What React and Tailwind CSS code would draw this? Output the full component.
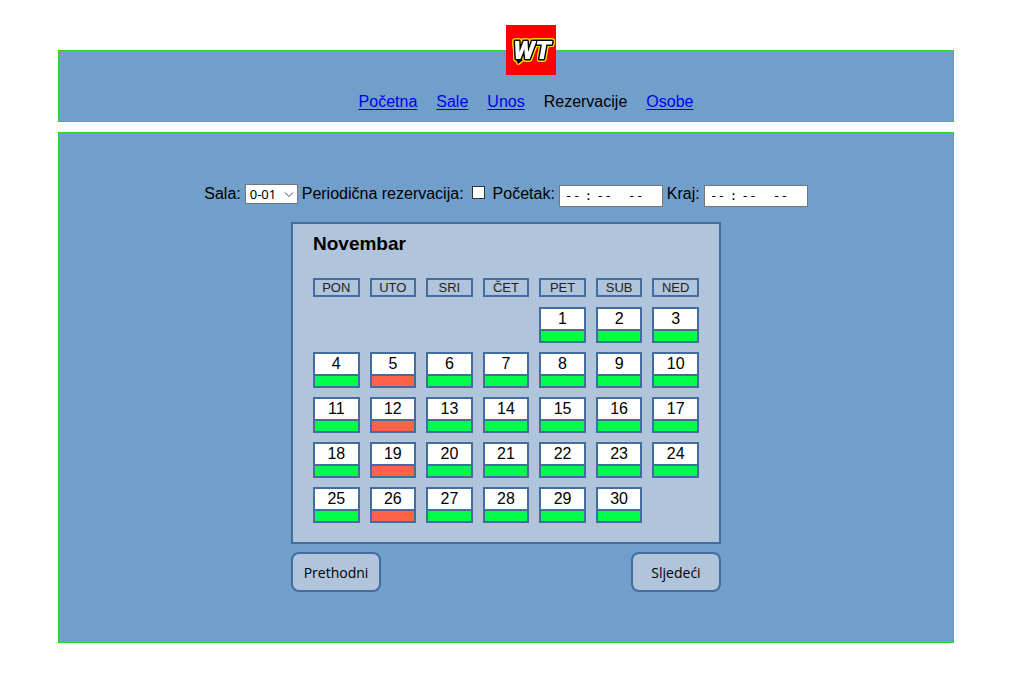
const dayNames = ["PON", "UTO", "SRI", "ČET", "PET", "SUB", "NED"];
const firstColumn = 4;
const dayCount = 30;
const booked = [5, 12, 19, 26];

const weeks = Array.from({ length: 5 }, (_, w) =>
  Array.from({ length: 7 }, (_, d) => {
    const day = w * 7 + d - firstColumn + 1;
    return day >= 1 && day <= dayCount ? day : null;
  })
);

function Logo() {
  return (
    <svg viewBox="0 0 50 50" className="absolute -top-[26px] left-1/2 size-[50px]" role="img" aria-label="WT">
      <rect width="50" height="50" fill="#ff0000" />
      <g className="[filter:drop-shadow(1px_0_0_#ffe500)_drop-shadow(-1px_0_0_#ffe500)_drop-shadow(0_1px_0_#ffe500)_drop-shadow(0_-1px_0_#ffe500)]">
        <path d="M9 32 L12 39 L17 35 Z" fill="#000" />
        <text
          x="26"
          y="34"
          textAnchor="middle"
          fill="#fff"
          stroke="#000"
          strokeWidth="3"
          strokeLinejoin="round"
          className="font-['Roboto',sans-serif] text-[26px] font-black italic [paint-order:stroke]"
        >
          WT
        </text>
      </g>
    </svg>
  );
}

function Day({ day }) {
  return (
    <div className="border-2 border-[#426da1] text-center text-base leading-5">
      <div className="bg-white">{day}</div>
      <div className={`h-3 border-t-2 border-[#426da1] ${booked.includes(day) ? "bg-[#ff6347]" : "bg-[#00ff4c]"}`} />
    </div>
  );
}

function TimeField({ id, label }) {
  return (
    <>
      <label htmlFor={id}>{label}</label>
      <input
        id={id}
        type="time"
        className="mt-[3px] h-[22px] w-[104px] border border-[#767676] bg-white pl-1 font-['DejaVu_Sans_Mono',monospace] text-[13px] [&::-webkit-calendar-picker-indicator]:hidden [&::-webkit-datetime-edit-text]:px-[3px]"
      />
    </>
  );
}

const navLink = "text-[#0000ee] underline underline-offset-2";
const navButton =
  "h-10 w-[90px] rounded-lg border-2 border-[#426da1] bg-[#b0c4dc] pt-px font-['Open_Sans',sans-serif] text-sm";

export default function App() {
  return (
    <div className="px-[58px] pt-[50px] pb-11 font-['Liberation_Sans',sans-serif] text-base text-black">
      <header className="relative border border-[#32cd32] bg-[#719fcb] pt-[39px] pb-[7px]">
        <Logo />
        <nav>
          <ul className="flex justify-center gap-[19px] pl-10">
            <li><a href="#pocetna" className={navLink}>Početna</a></li>
            <li><a href="#sale" className={navLink}>Sale</a></li>
            <li><a href="#unos" className={navLink}>Unos</a></li>
            <li>Rezervacije</li>
            <li><a href="#osobe" className={navLink}>Osobe</a></li>
          </ul>
        </nav>
      </header>

      <main className="mt-[10px] border border-[#32cd32] bg-[#719fcb] pt-[49px] pb-[50px]">
        <form className="flex flex-wrap items-start justify-center gap-1">
          <label htmlFor="sala">Sala:</label>
          <div className="relative mt-[2px]">
            <select
              id="sala"
              defaultValue="0-01"
              className="block h-5 w-[53px] appearance-none border border-[#767676] bg-white pl-1 font-['Noto_Sans',sans-serif] text-[13px] leading-4"
            >
              <option>0-01</option>
              <option>0-02</option>
              <option>1-01</option>
            </select>
            <svg viewBox="0 0 10 6" className="pointer-events-none absolute top-2 right-1 h-[6px] w-[10px]" fill="none" stroke="#444">
              <path d="M1 0.500 L5 4.500 L9 0.500" />
            </svg>
          </div>
          <label htmlFor="periodicna">Periodična rezervacija:</label>
          <input
            id="periodicna"
            type="checkbox"
            className="mx-1 mt-1 size-[13px] appearance-none border border-[#333] bg-white checked:bg-[#426da1]"
          />
          <TimeField id="pocetak" label="Početak:" />
          <TimeField id="kraj" label="Kraj:" />
        </form>

        <section className="mx-auto mt-[15px] w-[48%] min-w-[430px]">
          <div className="border-2 border-[#426da1] bg-[#b0c4dc] px-[10px] pt-2 pb-[10px]">
            <h3 className="px-[10px] text-[19px] leading-6 font-bold">Novembar</h3>
            <table className="mt-[13px] w-full table-fixed border-separate border-spacing-x-[10px] border-spacing-y-[9px]">
              <thead>
                <tr>
                  {dayNames.map((name) => (
                    <th key={name} scope="col" className="h-5 p-0 align-top font-normal">
                      <div className="border-2 border-[#426da1] text-[13px] leading-[15px] text-[#222]">{name}</div>
                    </th>
                  ))}
                </tr>
              </thead>
              <tbody>
                {weeks.map((week, w) => (
                  <tr key={w}>
                    {week.map((day, d) => (
                      <td key={d} className="p-0">{day && <Day day={day} />}</td>
                    ))}
                  </tr>
                ))}
              </tbody>
            </table>
          </div>
          <div className="mt-2 flex justify-between">
            <button type="button" className={navButton}>Prethodni</button>
            <button type="button" className={navButton}>Sljedeći</button>
          </div>
        </section>
      </main>
    </div>
  );
}
